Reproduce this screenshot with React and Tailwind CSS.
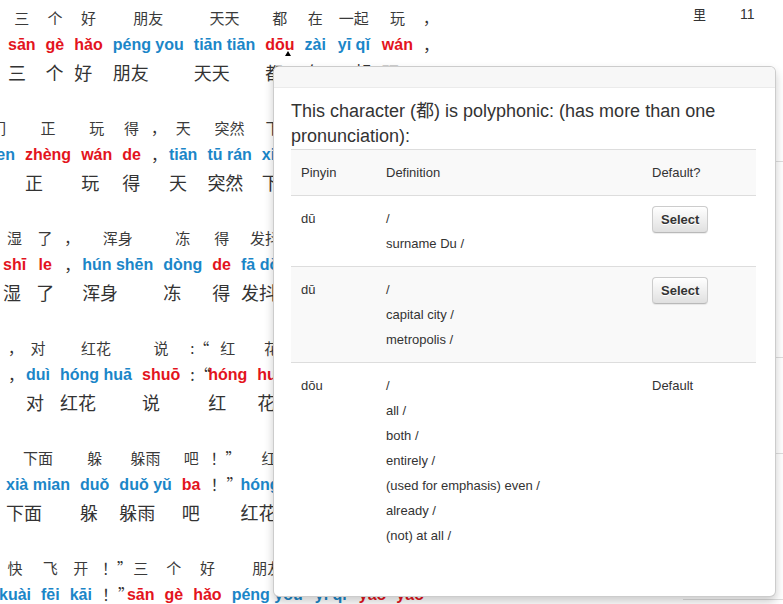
import React from "react";

const R = "r";
const B = "b";

const groups = [
  {
    ml: "ml-[8px]",
    items: [
      { h: "三", p: "sān", c: R },
      { h: "个", p: "gè", c: R },
      { h: "好", p: "hǎo", c: R },
      { h: "朋友", p: "péng you", c: B },
      { h: "天天", p: "tiān tiān", c: B },
      { h: "都", p: "dōu", c: R },
      { h: "在", p: "zài", c: B },
      { h: "一起", p: "yī qǐ", c: B },
      { h: "玩", p: "wán", c: R },
      { punct: "，", w: "w-[8px]" },
    ],
  },
  {
    ml: "-ml-[18px]",
    items: [
      { h: "们", p: "men", c: B },
      { h: "正", p: "zhèng", c: R },
      { h: "玩", p: "wán", c: R },
      { h: "得", p: "de", c: R },
      { punct: "，", w: "w-[8px]" },
      { h: "天", p: "tiān", c: B },
      { h: "突然", p: "tū rán", c: B },
      { h: "下", p: "xià", c: B },
      { h: "起", p: "qǐ", c: B },
      { h: "了", p: "le", c: R },
      { h: "大雨", p: "dà yǔ", c: B },
      { punct: "。", w: "w-[8px]" },
    ],
  },
  {
    ml: "ml-[3px]",
    items: [
      { h: "湿", p: "shī", c: R },
      { h: "了", p: "le", c: R },
      { punct: "，", w: "w-[8px]" },
      { h: "浑身", p: "hún shēn", c: B },
      { h: "冻", p: "dòng", c: B },
      { h: "得", p: "de", c: R },
      { h: "发抖", p: "fā dǒu", c: B },
      { punct: "。", w: "w-[8px]" },
      { h: "她们", p: "tā men", c: B },
    ],
  },
  {
    ml: "ml-[8px]",
    items: [
      { punct: "，", w: "w-[8px]" },
      { h: "对", p: "duì", c: B },
      { h: "红花", p: "hóng huā", c: B },
      { h: "说", p: "shuō", c: R },
      { punct: ":“", w: "w-[8px]" },
      { h: "红", p: "hóng", c: R },
      { h: "花", p: "huā", c: R },
      { h: "姐姐", p: "jiě jie", c: B },
    ],
  },
  {
    ml: "ml-[6px]",
    items: [
      { h: "下面", p: "xià mian", c: B },
      { h: "躲", p: "duǒ", c: B },
      { h: "躲雨", p: "duǒ yǔ", c: B },
      { h: "吧", p: "ba", c: R },
      { punct: "！”", w: "w-[20px]" },
      { h: "红花", p: "hóng huā", c: B },
      { h: "说", p: "shuō", c: R },
    ],
  },
  {
    ml: "-ml-[1px]",
    items: [
      { h: "快", p: "kuài", c: B },
      { h: "飞", p: "fēi", c: B },
      { h: "开", p: "kāi", c: B },
      { punct: "！”", w: "w-[15px]" },
      { h: "三", p: "sān", c: R },
      { h: "个", p: "gè", c: R },
      { h: "好", p: "hǎo", c: R },
      { h: "朋友", p: "péng you", c: B },
      { h: "一起", p: "yī qǐ", c: B },
      { h: "摇", p: "yáo", c: R },
      { h: "摇", p: "yáo", c: R },
    ],
  },
];

function Word({ item }) {
  if (item.punct) {
    return (
      <div className={`flex flex-col shrink-0 ${item.w}`}>
        <div className="h-[27px] leading-[27px] text-[15px] text-left whitespace-nowrap text-[#333] font-['Noto_Sans_CJK_SC',sans-serif]">
          {item.punct}
        </div>
        <div className="h-[27px] leading-[27px] text-[16px] text-left whitespace-nowrap text-[#333] font-['Noto_Sans_CJK_SC',sans-serif]">
          {item.punct}
        </div>
        <div className="h-[29px]" />
      </div>
    );
  }
  return (
    <div className="flex flex-col shrink-0">
      <div className="h-[27px] leading-[27px] text-[15px] text-center whitespace-nowrap text-[#3a3a3a] font-['Noto_Sans_CJK_SC',sans-serif]">
        {item.h}
      </div>
      <div
        className={
          item.c === R
            ? "h-[27px] leading-[27px] text-[16px] font-bold text-center whitespace-nowrap text-[#e3141d] font-['Liberation_Sans',sans-serif]"
            : "h-[27px] leading-[27px] text-[16px] font-bold text-center whitespace-nowrap text-[#1b86c8] font-['Liberation_Sans',sans-serif]"
        }
      >
        {item.p}
      </div>
      <div className="h-[29px] leading-[29px] text-[18px] text-left whitespace-nowrap text-[#333] font-['Noto_Sans_CJK_SC',sans-serif]">
        {item.h}
      </div>
    </div>
  );
}

const rows = [
  { p: "dū", defs: ["/", "surname Du /"], select: true, bg: "bg-white" },
  { p: "dū", defs: ["/", "capital city /", "metropolis /"], select: true, bg: "bg-[#f9f9f9]" },
  {
    p: "dōu",
    defs: ["/", "all /", "both /", "entirely /", "(used for emphasis) even /", "already /", "(not) at all /"],
    select: false,
    bg: "bg-white",
  },
];

export default function App() {
  return (
    <div className="relative w-[783px] h-[604px] overflow-hidden bg-white font-['Liberation_Sans',sans-serif]">
      <div className="flex">
        <div className="w-[683px] shrink-0 overflow-hidden pt-[4px]">
          {groups.map((g, gi) => (
            <div key={gi} className={`flex gap-[10px] mb-[27px] ${g.ml}`}>
              {g.items.map((it, i) => (
                <Word key={i} item={it} />
              ))}
            </div>
          ))}
        </div>
        <div className="flex-1 flex flex-col">
          <div className="h-[162px] border-b border-[#ddd] flex pt-[4px] leading-[20px] text-[#333]">
            <div className="w-[57px] pl-[10px] text-[13px] font-['Noto_Sans_CJK_SC',sans-serif]">里</div>
            <div className="text-[14px]">11</div>
          </div>
          <div className="h-[196px] border-b border-[#ddd]" />
          <div className="h-[96px] border-b border-[#ddd]" />
          <div className="h-[146px] border-b border-[#ddd]" />
        </div>
      </div>

      {/* caret under the clicked character */}
      <div className="absolute left-[285px] top-[51px] w-0 h-0 border-l-[3px] border-r-[3px] border-b-[5px] border-l-transparent border-r-transparent border-b-black" />

      {/* popover */}
      <div className="absolute left-[273px] top-[66px] w-[503px] h-[531px] bg-white border border-[rgba(0,0,0,0.2)] rounded-[6px] shadow-[0_5px_10px_rgba(0,0,0,0.2)] overflow-hidden">
        <div className="h-[21px] bg-[#f7f7f7] border-b border-[#ebebeb]" />
        <div className="pl-[17px] pr-[19px] pt-[9px]">
          <div className="text-[18px] leading-[25px] text-[#333] w-[465px]">
            This character (<span className="font-['Noto_Sans_CJK_SC',sans-serif]">都</span>) is polyphonic: (has more than one pronunciation):
          </div>
          <div className="w-[465px] border-t border-[#ddd] text-[13px] text-[#333]">
            <div className="grid grid-cols-[85px_266px_114px] h-[46px] items-center bg-[#f9f9f9] border-b border-[#ddd]">
              <div className="pl-[10px]">Pinyin</div>
              <div className="pl-[10px]">Definition</div>
              <div className="pl-[10px]">Default?</div>
            </div>
            {rows.map((r, i) => (
              <div
                key={i}
                className={`grid grid-cols-[85px_266px_114px] py-[10px] ${r.bg} ${i < 2 ? "border-b border-[#ddd]" : ""}`}
              >
                <div className="pl-[10px] leading-[25px]">{r.p}</div>
                <div className="pl-[10px]">
                  {r.defs.map((d, j) => (
                    <div key={j} className="leading-[25px]">
                      {d}
                    </div>
                  ))}
                </div>
                <div className="pl-[10px]">
                  {r.select ? (
                    <button className="h-[27px] px-[8px] rounded-[4px] border border-[#ccc] border-b-[#b9b9b9] bg-gradient-to-b from-white to-[#e0e0e0] font-bold text-[13px] leading-[17px] text-[#333] shadow-[0_1px_1px_rgba(0,0,0,0.075)] [text-shadow:0_1px_0_#fff]">
                      Select
                    </button>
                  ) : (
                    <div className="leading-[25px]">Default</div>
                  )}
                </div>
              </div>
            ))}
          </div>
        </div>
      </div>
    </div>
  );
}
